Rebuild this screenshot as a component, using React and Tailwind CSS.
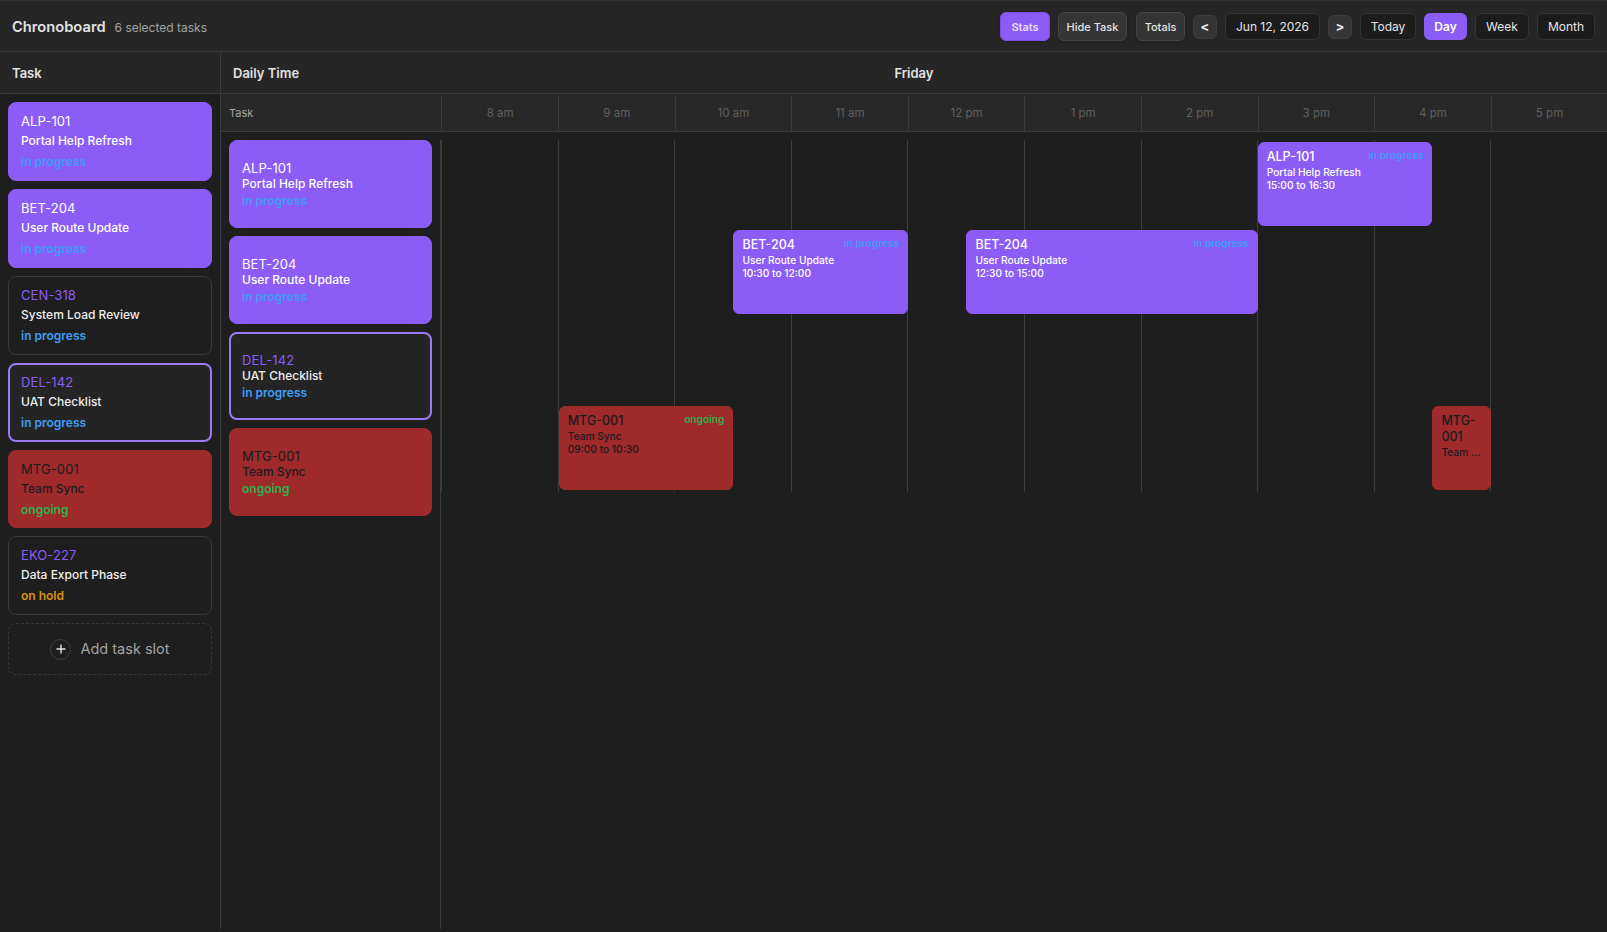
import React from 'react'

const STATUS_COLOR = {
  'in progress': 'text-[#3d9df6]',
  ongoing: 'text-[#2cb14f]',
  'on hold': 'text-[#d8920f]',
}

const TASKS = [
  { id: 'ALP-101', name: 'Portal Help Refresh', status: 'in progress', kind: 'filled' },
  { id: 'BET-204', name: 'User Route Update', status: 'in progress', kind: 'filled' },
  { id: 'CEN-318', name: 'System Load Review', status: 'in progress', kind: 'plain' },
  { id: 'DEL-142', name: 'UAT Checklist', status: 'in progress', kind: 'active' },
  { id: 'MTG-001', name: 'Team Sync', status: 'ongoing', kind: 'meeting' },
  { id: 'EKO-227', name: 'Data Export Phase', status: 'on hold', kind: 'plain' },
]

const CARD_STYLE = {
  filled: { box: 'bg-[#8b5cf6] border border-[#8b5cf6] px-3', id: 'text-white', name: 'text-white' },
  plain: { box: 'bg-[#1e1e1e] border border-[#383838] px-3', id: 'text-[#8b5cf6]', name: 'text-[#eeeeee]' },
  active: { box: 'bg-[#242424] border-2 border-[#9b79f2] px-[11px]', id: 'text-[#8b5cf6]', name: 'text-[#eeeeee]' },
  meeting: { box: 'bg-[#9f2a2c] border border-[#9f2a2c] px-3', id: 'text-[#1c1c1c]', name: 'text-[#1c1c1c]' },
}

const HOURS = ['8 am', '9 am', '10 am', '11 am', '12 pm', '1 pm', '2 pm', '3 pm', '4 pm', '5 pm']
const DAY_START = 8
// event blocks sit on a slightly narrower hour than the header cells
const EVENT_HOUR_W = 116.5
const EVENT_OFFSET = 1.2

const ROWS = [
  [{ id: 'ALP-101', name: 'Portal Help Refresh', time: '15:00 to 16:30', from: 15, to: 16.5, status: 'in progress', kind: 'filled' }],
  [
    { id: 'BET-204', name: 'User Route Update', time: '10:30 to 12:00', from: 10.5, to: 12, status: 'in progress', kind: 'filled' },
    { id: 'BET-204', name: 'User Route Update', time: '12:30 to 15:00', from: 12.5, to: 15, status: 'in progress', kind: 'filled' },
  ],
  [],
  [
    { id: 'MTG-001', name: 'Team Sync', time: '09:00 to 10:30', from: 9, to: 10.5, status: 'ongoing', kind: 'meeting' },
    { id: 'MTG-001', name: 'Team Sync', time: '', from: 16.5, to: 17, status: '', kind: 'meeting' },
  ],
]

function HeaderButton({ children, active, className }) {
  return (
    <button
      className={`h-[29px] pt-[3px] rounded-md border text-[11px] shadow-sm ${className} ${
        active
          ? 'bg-[#8b5cf6] border-[#7c4fe6] text-[#e6dcff] font-semibold'
          : 'bg-[#353535] border-[#444444] text-[#e4e4e4] font-medium'
      }`}
    >
      {children}
    </button>
  )
}

function NavButton({ children }) {
  return (
    <button className="h-6 w-6 mt-[1px] rounded-md bg-[#353535] border border-[#3d3d3d] text-[#eeeeee] text-[13px] font-bold flex items-center justify-center">
      {children}
    </button>
  )
}

function ViewButton({ children, active, className }) {
  return (
    <button
      className={`h-[27px] mt-[1px] pt-[1px] rounded-md border text-[12px] ${className} ${
        active
          ? 'bg-[#8b5cf6] border-[#8b5cf6] text-white font-semibold'
          : 'bg-[#1c1c1c] border-[#333333] text-[#e4e4e4]'
      }`}
    >
      {children}
    </button>
  )
}

function SidebarCard({ task }) {
  const s = CARD_STYLE[task.kind]
  return (
    <div className={`h-[78.88px] rounded-lg ${task.kind === 'active' ? 'pt-[7px]' : 'pt-[8px]'} ${s.box}`}>
      <div className={`text-[13px] leading-5 tracking-[0.1px] ${s.id}`}>{task.id}</div>
      <div className={`text-[12px] leading-5 font-medium ${s.name}`}>{task.name}</div>
      <div className={`text-[12px] leading-5 mt-[1px] font-semibold ${STATUS_COLOR[task.status]}`}>{task.status}</div>
    </div>
  )
}

function RowCard({ task }) {
  const s = CARD_STYLE[task.kind]
  return (
    <div className={`h-[88px] rounded-lg pt-[1px] flex flex-col justify-center ${s.box}`}>
      <div className={`text-[13px] leading-4 tracking-[0.1px] ${s.id}`}>{task.id}</div>
      <div className={`text-[12px] leading-4 font-medium ${s.name}`}>{task.name}</div>
      <div className={`text-[12px] leading-[18px] font-semibold ${STATUS_COLOR[task.status]}`}>{task.status}</div>
    </div>
  )
}

function EventBlock({ ev }) {
  const s = CARD_STYLE[ev.kind]
  const left = EVENT_OFFSET + (ev.from - DAY_START) * EVENT_HOUR_W
  const width = (ev.to - ev.from) * EVENT_HOUR_W
  return (
    <div
      className={`absolute top-[2px] h-[84px] rounded-md !px-[8px] pt-[6px] overflow-hidden ${s.box}`}
      style={{ left, width }}
    >
      {ev.status && (
        <span className={`absolute right-[8px] top-[4px] text-[10.2px] leading-4 font-semibold ${STATUS_COLOR[ev.status]}`}>
          {ev.status}
        </span>
      )}
      <div className={`text-[12.5px] leading-4 font-medium ${s.id}`}>{ev.id}</div>
      <div className={`text-[10.2px] leading-[13px] mt-[1px] font-medium truncate ${s.name}`}>{ev.name}</div>
      {ev.time && <div className={`text-[10.2px] leading-[13px] font-medium ${s.name}`}>{ev.time}</div>}
    </div>
  )
}

export default function App() {
  return (
    <div className="min-h-[932px] bg-[#1e1e1e] font-['Inter',sans-serif] overflow-hidden">
      <div className="h-[929px] flex flex-col">
        <header className="h-[52px] shrink-0 bg-[#262626] border-t border-t-[#333333] border-b border-b-[#3a3a3a] flex items-center pl-3 pr-3">
          <div className="pt-[2px] flex items-baseline">
            <span className="text-[14.7px] font-semibold text-[#e2e2e2]">Chronoboard</span>
            <span className="ml-[9px] text-[12px] text-[#a3a3a3]">6 selected tasks</span>
          </div>
          <div className="ml-auto flex items-center gap-2">
            <HeaderButton active className="w-[50px]">Stats</HeaderButton>
            <HeaderButton className="w-[69px] mr-[1px]">Hide Task</HeaderButton>
            <HeaderButton className="w-[49px]">Totals</HeaderButton>
            <NavButton>&lt;</NavButton>
            <ViewButton className="w-[95px]">Jun 12, 2026</ViewButton>
            <NavButton>&gt;</NavButton>
            <ViewButton className="w-[56px]">Today</ViewButton>
            <ViewButton active className="w-[43px]">Day</ViewButton>
            <ViewButton className="w-[54px]">Week</ViewButton>
            <ViewButton className="w-[58px]">Month</ViewButton>
          </div>
        </header>

        <div className="flex-1 flex min-h-0">
          {/* Task list */}
          <aside className="w-[221px] shrink-0 border-r border-[#3a3a3a] flex flex-col">
            <div className="h-[42px] pt-[2px] shrink-0 bg-[#262626] border-b border-[#3a3a3a] flex items-center px-3 text-[13px] font-semibold text-[#e2e2e2]">
              Task
            </div>
            <div className="p-2 flex flex-col gap-2">
              {TASKS.map(t => <SidebarCard key={t.id} task={t} />)}
              <button className="h-[52px] rounded-lg border border-dashed border-[#383838] flex items-center justify-center gap-[9px] text-[14.5px] text-[#a3a3a3]">
                <span className="w-[21px] h-[21px] rounded-full border border-[#3f3f3f] flex items-center justify-center text-[#e4e4e4]">
                  <svg width="10" height="10" viewBox="0 0 10 10" fill="none" stroke="currentColor" strokeWidth="1.4"><path d="M5 0.5v9M0.5 5h9" /></svg>
                </span>
                Add task slot
              </button>
            </div>
          </aside>

          {/* Timeline */}
          <section className="flex-1 min-w-0 flex flex-col">
            <div className="h-[42px] pt-[2px] shrink-0 bg-[#262626] border-b border-[#3a3a3a] grid grid-cols-[1fr_auto_1fr] items-center px-3 text-[13px] font-semibold text-[#e2e2e2]">
              <span>Daily Time</span>
              <span>Friday</span>
              <span />
            </div>
            <div className="h-[38px] pt-[2px] shrink-0 bg-[#282828] border-b border-[#3a3a3a] flex">
              <div className="w-[221.4px] shrink-0 border-r border-[#3a3a3a] flex items-center px-2 text-[11px] text-[#a3a3a3]">Task</div>
              {HOURS.map(h => (
                <div key={h} className="w-[116.6px] shrink-0 border-r border-[#3a3a3a] flex items-center justify-center text-[11.5px] text-[#5f5f5f]">
                  {h}
                </div>
              ))}
            </div>
            <div className="flex-1 min-h-0 flex">
              <div className="w-[220px] shrink-0 border-r border-[#3a3a3a] mt-2 px-2 flex flex-col gap-2">
                {TASKS.filter(t => t.id !== 'CEN-318' && t.id !== 'EKO-227').map(t => <RowCard key={t.id} task={t} />)}
              </div>
              <div className="relative flex-1 min-w-0 mt-2">
                <div className="absolute left-0 top-0 h-[352px] flex border-l border-[#3d3d3d]">
                  {HOURS.map(h => <div key={h} className="w-[116.6px] shrink-0 border-r border-[#3d3d3d]" />)}
                </div>
                {ROWS.map((row, i) => (
                  <div key={i} className="relative h-[88px]">
                    {row.map(ev => <EventBlock key={ev.time + ev.from} ev={ev} />)}
                  </div>
                ))}
              </div>
            </div>
          </section>
        </div>
      </div>
    </div>
  )
}
